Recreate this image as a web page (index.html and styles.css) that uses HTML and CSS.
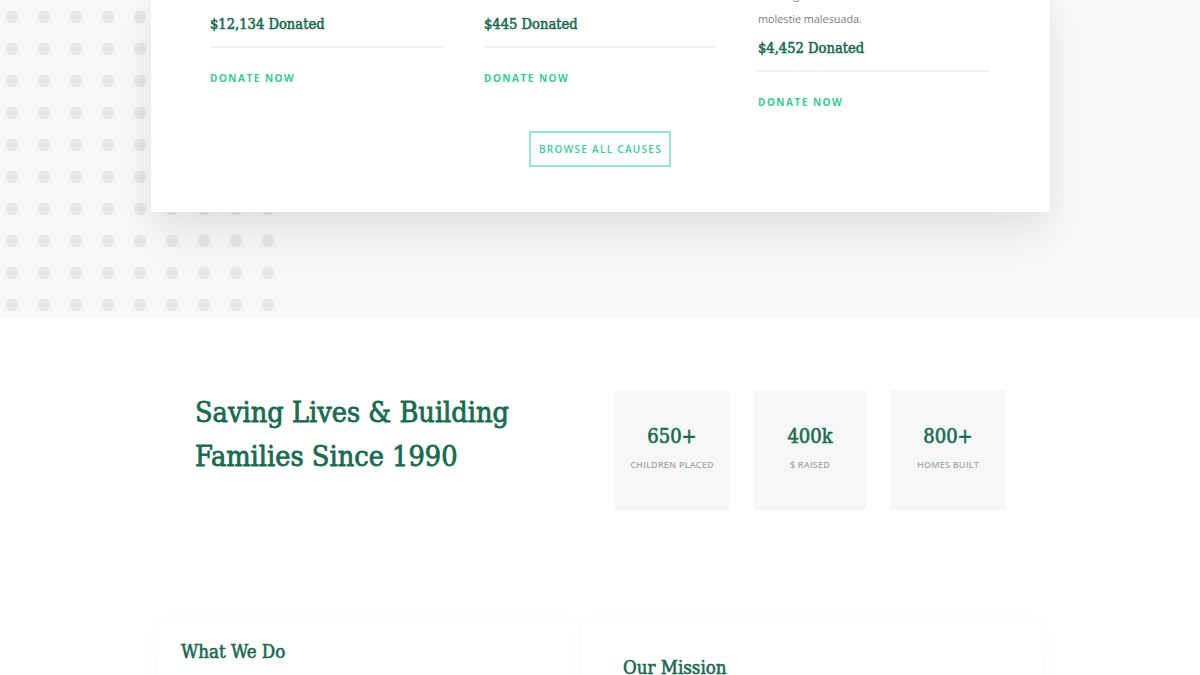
FILE: index.html
```html
<!DOCTYPE html>
<html lang="en">
<head>
<meta charset="utf-8">
<title>Causes</title>
<link rel="stylesheet" href="styles.css">
</head>
<body>
<section class="causes">
  <div class="causes-card">
    <div class="cause-grid">
      <div class="cause">
        <p class="cause-desc">Nulla luctus sit amet lectus mattis rhoncus.</p>
        <h4 class="cause-amount">$12,134 Donated</h4>
        <div class="cause-rule"></div>
        <a class="cause-link" href="#">Donate Now</a>
      </div>
      <div class="cause">
        <p class="cause-desc">Curabitur non nulla sit amet nisl lorem.</p>
        <h4 class="cause-amount">$445 Donated</h4>
        <div class="cause-rule"></div>
        <a class="cause-link" href="#">Donate Now</a>
      </div>
      <div class="cause">
        <p class="cause-desc">Proin eget tortor risus. Donec sollicitudin molestie malesuada.</p>
        <h4 class="cause-amount">$4,452 Donated</h4>
        <div class="cause-rule"></div>
        <a class="cause-link" href="#">Donate Now</a>
      </div>
    </div>
    <div class="causes-action">
      <a class="btn-outline" href="#">Browse All Causes</a>
    </div>
  </div>
</section>

<section class="stats">
  <div class="stats-inner">
    <h2 class="stats-title">Saving Lives &amp; Building<br>Families Since 1990</h2>
    <div class="stats-list">
      <div class="stat">
        <div class="stat-num">650+</div>
        <div class="stat-label">Children Placed</div>
      </div>
      <div class="stat">
        <div class="stat-num">400k</div>
        <div class="stat-label">$ Raised</div>
      </div>
      <div class="stat">
        <div class="stat-num">800+</div>
        <div class="stat-label">Homes Built</div>
      </div>
    </div>
  </div>
</section>

<section class="about">
  <div class="about-inner">
    <div class="about-card">
      <h3 class="about-title">What We Do</h3>
      <p class="about-text">Praesent sapien massa, convallis a pellentesque nec, egestas non nisi. Vestibulum ac diam sit amet quam vehicula elementum.</p>
    </div>
    <div class="about-card about-card--mission">
      <h3 class="about-title">Our Mission</h3>
      <p class="about-text">Cras ultricies ligula sed magna dictum porta. Donec rutrum congue leo eget malesuada.</p>
    </div>
  </div>
</section>
</body>
</html>
```

FILE: styles.css
```css
* { box-sizing: border-box; }

html, body {
  margin: 0;
  padding: 0;
  background: #ffffff;
  font-family: "Open Sans", "Liberation Sans", sans-serif;
}

/* ---------- causes ---------- */
.causes {
  position: relative;
  display: flow-root;
  background: #f7f8f8;
  padding-bottom: 106px;
}

.causes::before {
  content: "";
  position: absolute;
  left: 0;
  top: 0;
  width: 284px;
  height: 100%;
  background-image: radial-gradient(circle, #e6e7e7 0, #e6e7e7 6px, rgba(230,231,231,0) 6.8px);
  background-size: 32px 32px;
  background-position: -4px 1px;
}

.causes-card {
  position: relative;
  z-index: 1;
  width: 899px;
  margin: -17px 0 0 151px;
  background: #ffffff;
  padding: 0 60px 45px 59px;
  box-shadow: 0 26px 46px rgba(0, 0, 0, 0.07), 0 8px 24px rgba(0, 0, 0, 0.03);
}

.cause-grid {
  display: grid;
  grid-template-columns: repeat(3, 232px);
  column-gap: 42px;
  align-items: start;
}

.cause-desc {
  margin: 0;
  font-size: 10.8px;
  line-height: 24px;
  color: #7a7d7d;
}

.cause-amount {
  margin: 6px 0 0;
  font-family: "DejaVu Serif Condensed", "DejaVu Serif", serif;
  font-stretch: condensed;
  font-weight: 400;
  font-size: 14.6px;
  line-height: 22px;
  color: #1b6a52;
  -webkit-text-stroke: 0.55px #1b6a52;
}

.cause-rule {
  height: 2px;
  margin-top: 11px;
  background: #f0f1f1;
}

.cause-link {
  display: block;
  margin-top: 22px;
  font-size: 10px;
  line-height: 16px;
  font-weight: 700;
  letter-spacing: 1.5px;
  text-transform: uppercase;
  text-decoration: none;
  color: #3ac991;
}

.causes-action {
  display: flex;
  justify-content: center;
  margin-top: 21px;
}

.btn-outline {
  display: inline-block;
  border: 2px solid #9ae5c9;
  padding: 8px 7px 8px 8px;
  font-size: 10px;
  line-height: 16px;
  font-weight: 600;
  letter-spacing: 1.3px;
  text-transform: uppercase;
  text-decoration: none;
  color: #40c995;
}

/* ---------- stats ---------- */
.stats {
  padding: 72px 0 113px;
}

.stats-inner {
  width: 810px;
  margin: 0 auto;
  display: flex;
  justify-content: space-between;
  align-items: flex-start;
}

.stats-title {
  margin: 0;
  font-family: "DejaVu Serif Condensed", "DejaVu Serif", serif;
  font-stretch: condensed;
  font-weight: 400;
  font-size: 28.6px;
  line-height: 44px;
  color: #1b6a52;
  -webkit-text-stroke: 0.8px #1b6a52;
}

.stats-list {
  display: grid;
  grid-template-columns: repeat(3, 114px);
  column-gap: 24px;
}

.stat {
  height: 120px;
  background: #f6f8f8;
  display: flex;
  flex-direction: column;
  align-items: center;
  padding-top: 33px;
}

.stat-num {
  font-family: "DejaVu Serif Condensed", "DejaVu Serif", serif;
  font-stretch: condensed;
  font-weight: 400;
  font-size: 20px;
  line-height: 26px;
  color: #1b6a52;
  -webkit-text-stroke: 0.6px #1b6a52;
}

.stat-label {
  margin-top: 10px;
  font-size: 9px;
  line-height: 12px;
  font-weight: 600;
  letter-spacing: 0.2px;
  text-transform: uppercase;
  color: #a6a9a9;
}

/* ---------- about ---------- */
.about-inner {
  width: 884px;
  margin-left: 158px;
  display: grid;
  grid-template-columns: 420px 1fr;
  column-gap: 4px;
  align-items: start;
}

.about-card {
  background: #ffffff;
  padding: 17px 23px 40px;
  box-shadow: 0 0 30px rgba(0, 0, 0, 0.028);
}

.about-card--mission {
  padding: 33px 41px 40px;
}

.about-title {
  margin: 0;
  font-family: "DejaVu Serif Condensed", "DejaVu Serif", serif;
  font-stretch: condensed;
  font-weight: 400;
  font-size: 18.6px;
  line-height: 24px;
  color: #1b6a52;
  -webkit-text-stroke: 0.6px #1b6a52;
}

.about-text {
  margin: 14px 0 0;
  font-size: 11px;
  line-height: 22px;
  color: #7a7d7d;
}
```
